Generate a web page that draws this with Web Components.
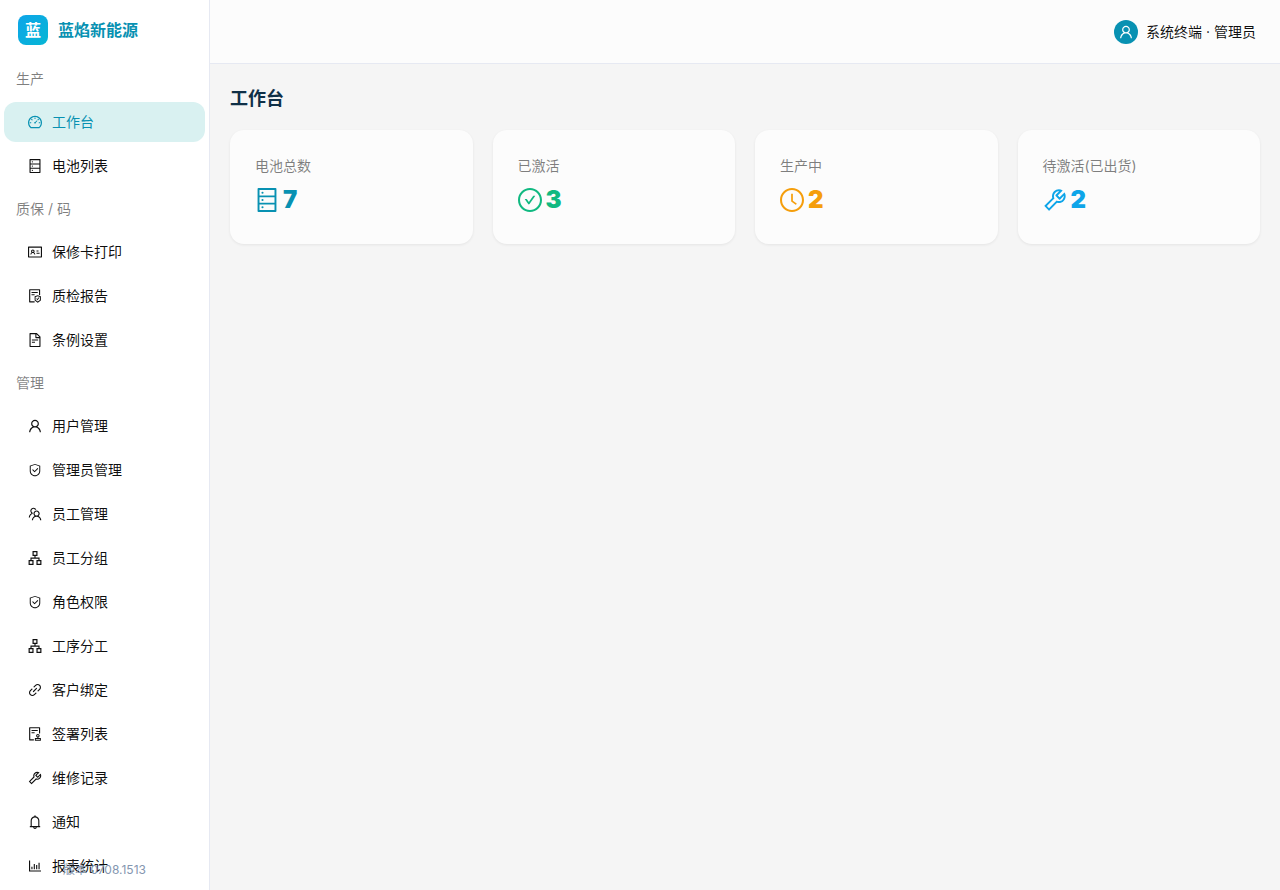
<!DOCTYPE html>
<html lang="zh-CN">
<head>
<meta charset="utf-8">
<title>蓝焰新能源</title>
<style>
    body{
        margin: 0;
        background: #f5f5f5;
        color: rgba(0, 0, 0, .94);
        font: 14px/22px Inter, "Noto Sans CJK SC", sans-serif;
        --primary: #0891b2;
        --line: #e6e9f2;
        --muted: rgba(0, 0, 0, .5);
    }
</style>
</head>
<body>
<app-layout>
    <side-brand slot="side" mark="蓝">蓝焰新能源</side-brand>
    <menu-group slot="side" label="生产">
        <menu-item icon="dashboard" active>工作台</menu-item>
        <menu-item icon="database">电池列表</menu-item>
    </menu-group>
    <menu-group slot="side" label="质保 / 码">
        <menu-item icon="idcard">保修卡打印</menu-item>
        <menu-item icon="protect">质检报告</menu-item>
        <menu-item icon="file">条例设置</menu-item>
    </menu-group>
    <menu-group slot="side" label="管理">
        <menu-item icon="user">用户管理</menu-item>
        <menu-item icon="safety">管理员管理</menu-item>
        <menu-item icon="team">员工管理</menu-item>
        <menu-item icon="apartment">员工分组</menu-item>
        <menu-item icon="safety">角色权限</menu-item>
        <menu-item icon="apartment">工序分工</menu-item>
        <menu-item icon="link">客户绑定</menu-item>
        <menu-item icon="audit">签署列表</menu-item>
        <menu-item icon="tool">维修记录</menu-item>
        <menu-item icon="bell">通知</menu-item>
        <menu-item icon="chart">报表统计</menu-item>
    </menu-group>
    <span slot="version">版本 0708.1513</span>
    <user-badge slot="header">系统终端 · 管理员</user-badge>
    <page-title>工作台</page-title>
    <stat-grid>
        <stat-card label="电池总数" icon="database" color="#0891b2">7</stat-card>
        <stat-card label="已激活" icon="check" color="#10b981">3</stat-card>
        <stat-card label="生产中" icon="clock" color="#f59e0b">2</stat-card>
        <stat-card label="待激活(已出货)" icon="tool" color="#0ea5e9">2</stat-card>
    </stat-grid>
</app-layout>

<script>
const RING = 'M512 64C264.6 64 64 264.6 64 512s200.6 448 448 448 448-200.6 448-448S759.4 64 512 64zm0 820c-205.4 0-372-166.6-372-372s166.6-372 372-372 372 166.6 372 372-166.6 372-372 372z'

const ICONS = {
    dashboard: 'M924.8 385.6a446.7 446.7 0 00-96-142.4 446.7 446.7 0 00-142.4-96C631.1 123.8 572.5 112 512 112s-119.1 11.8-174.4 35.2a446.7 446.7 0 00-142.4 96 446.7 446.7 0 00-96 142.4C75.8 440.9 64 499.5 64 560c0 132.7 58.3 257.7 159.9 343.1l1.7 1.4c5.8 4.8 13.1 7.5 20.6 7.5h531.7c7.5 0 14.8-2.7 20.6-7.5l1.7-1.4C901.7 817.7 960 692.7 960 560c0-60.5-11.9-119.1-35.2-174.4zM761.4 836H262.6A371.12 371.12 0 01140 560c0-99.4 38.7-192.8 109-263 70.3-70.3 163.7-109 263-109 99.4 0 192.8 38.7 263 109 70.3 70.3 109 163.7 109 263 0 105.6-44.5 205.5-122.6 276zM623.5 421.5a8.03 8.03 0 00-11.3 0L527.7 506c-18.7-5-39.4-.2-54.1 14.5a55.95 55.95 0 000 79.2 55.95 55.95 0 0079.2 0 55.87 55.87 0 0014.5-54.1l84.5-84.5c3.1-3.1 3.1-8.2 0-11.3l-28.3-28.3zM490 320h44c4.4 0 8-3.6 8-8v-80c0-4.4-3.6-8-8-8h-44c-4.4 0-8 3.6-8 8v80c0 4.4 3.6 8 8 8zm260 218v44c0 4.4 3.6 8 8 8h80c4.4 0 8-3.6 8-8v-44c0-4.4-3.6-8-8-8h-80c-4.4 0-8 3.6-8 8zm12.7-197.2l-31.1-31.1a8.03 8.03 0 00-11.3 0l-56.6 56.6a8.03 8.03 0 000 11.3l31.1 31.1c3.1 3.1 8.2 3.1 11.3 0l56.6-56.6c3.1-3.1 3.1-8.2 0-11.3zm-458.6-31.1a8.03 8.03 0 00-11.3 0l-31.1 31.1a8.03 8.03 0 000 11.3l56.6 56.6c3.1 3.1 8.2 3.1 11.3 0l31.1-31.1c3.1-3.1 3.1-8.2 0-11.3l-56.6-56.6zM262 530h-80c-4.4 0-8 3.6-8 8v44c0 4.4 3.6 8 8 8h80c4.4 0 8-3.6 8-8v-44c0-4.4-3.6-8-8-8z',
    database: 'M832 64H192c-17.7 0-32 14.3-32 32v832c0 17.7 14.3 32 32 32h640c17.7 0 32-14.3 32-32V96c0-17.7-14.3-32-32-32zm-600 72h560v208H232V136zm560 480H232V408h560v208zm0 272H232V680h560v208zM304 240a40 40 0 1080 0 40 40 0 10-80 0zm0 272a40 40 0 1080 0 40 40 0 10-80 0zm0 272a40 40 0 1080 0 40 40 0 10-80 0z',
    idcard: 'M928 160H96c-17.7 0-32 14.3-32 32v640c0 17.7 14.3 32 32 32h832c17.7 0 32-14.3 32-32V192c0-17.7-14.3-32-32-32zm-40 632H136V232h752v560zM610.3 476h123.4c1.3 0 2.3-3.6 2.3-8v-48c0-4.4-1-8-2.3-8H610.3c-1.3 0-2.3 3.6-2.3 8v48c0 4.4 1 8 2.3 8zm4.8 144h185.7c3.9 0 7.1-3.6 7.1-8v-48c0-4.4-3.2-8-7.1-8H615.1c-3.9 0-7.1 3.6-7.1 8v48c0 4.4 3.2 8 7.1 8zM224 673h43.9c4.2 0 7.6-3.3 7.9-7.5 3.8-50.5 46-90.5 97.2-90.5s93.4 40 97.2 90.5c.3 4.2 3.7 7.5 7.9 7.5H522a8 8 0 008-8.4c-2.8-53.3-32-99.7-74.6-126.1a111.8 111.8 0 0029.1-75.5c0-61.9-49.9-112-111.4-112s-111.4 50.1-111.4 112c0 29.1 11 55.5 29.1 75.5a158.09 158.09 0 00-74.6 126.1c-.4 4.6 3.2 8.4 7.8 8.4zm149-262c28.5 0 51.7 23.3 51.7 52s-23.2 52-51.7 52-51.7-23.3-51.7-52 23.2-52 51.7-52z',
    protect: 'M644.7 669.2a7.92 7.92 0 00-6.5-3.3H594c-6.5 0-10.3 7.4-6.5 12.6l73.8 102.1c3.2 4.4 9.7 4.4 12.9 0l114.2-158c3.8-5.3 0-12.6-6.5-12.6h-44.3c-2.6 0-5 1.2-6.5 3.3l-63.5 87.8-22.9-31.9zM688 306v-48c0-4.4-3.6-8-8-8H296c-4.4 0-8 3.6-8 8v48c0 4.4 3.6 8 8 8h384c4.4 0 8-3.6 8-8zm-392 88c-4.4 0-8 3.6-8 8v48c0 4.4 3.6 8 8 8h184c4.4 0 8-3.6 8-8v-48c0-4.4-3.6-8-8-8H296zm184 458H208V148h560v296c0 4.4 3.6 8 8 8h56c4.4 0 8-3.6 8-8V108c0-17.7-14.3-32-32-32H168c-17.7 0-32 14.3-32 32v784c0 17.7 14.3 32 32 32h312c4.4 0 8-3.6 8-8v-56c0-4.4-3.6-8-8-8zm402.6-320.8l-192-66.7c-.9-.3-1.7-.4-2.6-.4s-1.8.1-2.6.4l-192 66.7a7.96 7.96 0 00-5.4 7.5v251.1c0 2.5 1.1 4.8 3.1 6.3l192 150.2c1.4 1.1 3.2 1.7 4.9 1.7s3.5-.6 4.9-1.7l192-150.2c1.9-1.5 3.1-3.8 3.1-6.3V538.7c0-3.4-2.2-6.4-5.4-7.5zM826 763.7L688 871.6 550 763.7V577l138-48 138 48v186.7z',
    file: 'M854.6 288.6L639.4 73.4c-6-6-14.1-9.4-22.6-9.4H192c-17.7 0-32 14.3-32 32v832c0 17.7 14.3 32 32 32h640c17.7 0 32-14.3 32-32V311.3c0-8.5-3.4-16.7-9.4-22.7zM790.2 326H602V137.8L790.2 326zm1.8 562H232V136h302v216a42 42 0 0042 42h216v494zM504 618H320c-4.4 0-8 3.6-8 8v48c0 4.4 3.6 8 8 8h184c4.4 0 8-3.6 8-8v-48c0-4.4-3.6-8-8-8zM312 490v48c0 4.4 3.6 8 8 8h384c4.4 0 8-3.6 8-8v-48c0-4.4-3.6-8-8-8H320c-4.4 0-8 3.6-8 8z',
    user: 'M858.5 763.6a374 374 0 00-80.6-119.5 375.63 375.63 0 00-119.5-80.6c-.4-.2-.8-.3-1.2-.5C719.5 518 760 444.7 760 362c0-137-111-248-248-248S264 225 264 362c0 82.7 40.5 156 102.8 201.1-.4.2-.8.3-1.2.5-44.8 18.9-85 46-119.5 80.6a375.63 375.63 0 00-80.6 119.5A371.7 371.7 0 00136 901.8a8 8 0 008 8.2h60c4.4 0 7.9-3.5 8-7.8 2-77.2 33-149.5 87.8-204.3 56.7-56.7 132-87.9 212.2-87.9s155.5 31.2 212.2 87.9C779 752.7 810 825 812 902.2c.1 4.4 3.6 7.8 8 7.8h60a8 8 0 008-8.2c-1-47.8-10.9-94.3-29.5-138.2zM512 534c-45.9 0-89.1-17.9-121.6-50.4S340 407.9 340 362c0-45.9 17.9-89.1 50.4-121.6S466.1 190 512 190s89.1 17.9 121.6 50.4S684 316.1 684 362c0 45.9-17.9 89.1-50.4 121.6S557.9 534 512 534z',
    safety: 'M512 64L128 192v384c0 212.1 171.9 384 384 384s384-171.9 384-384V192L512 64zm312 512c0 172.3-139.7 312-312 312S200 748.3 200 576V246l312-110 312 110v330zM378.4 475.1a35.91 35.91 0 00-50.9 0 35.91 35.91 0 000 50.9l129.4 129.4 2.1 2.1a33.98 33.98 0 0048.1 0L730.6 434a33.98 33.98 0 000-48.1l-2.8-2.8a33.98 33.98 0 00-48.1 0L483 579.7 378.4 475.1z',
    team: 'M824.2 699.9a301.55 301.55 0 00-86.4-60.4C783.1 602.8 812 546.8 812 484c0-110.8-92.4-201.7-203.2-200-109.1 1.7-197 90.6-197 200 0 62.8 29 118.8 74.2 155.5a300.95 300.95 0 00-86.4 60.4C345 754.6 314 826.8 312 903.8a8 8 0 008 8.2h56c4.3 0 7.9-3.4 8-7.7 1.9-58 25.4-112.3 66.7-153.5A226.62 226.62 0 01612 684c60.9 0 118.2 23.7 161.3 66.8C814.6 792 838 846.3 840 904.3c.1 4.3 3.7 7.7 8 7.7h56a8 8 0 008-8.2c-2-77-33-149.2-87.8-203.9zM612 612c-34.2 0-66.4-13.3-90.5-37.5a126.86 126.86 0 01-37.5-91.8c.3-32.8 13.4-64.5 36.3-88 24-24.6 56.1-38.3 90.4-38.7 33.9-.3 66.8 12.9 91 36.6 24.8 24.3 38.4 56.8 38.4 91.4 0 34.2-13.3 66.3-37.5 90.5A127.3 127.3 0 01612 612zM361.5 510.4c-.9-8.7-1.4-17.5-1.4-26.4 0-15.9 1.5-31.4 4.3-46.5.7-3.6-1.2-7.3-4.5-8.8-13.6-6.1-26.1-14.5-36.9-25.1a127.54 127.54 0 01-38.7-95.4c.9-32.1 13.8-62.6 36.3-85.6 24.7-25.3 57.9-39.1 93.2-38.7 31.9.3 62.7 12.6 86 34.4 7.9 7.4 14.7 15.6 20.4 24.4 2 3.1 5.9 4.4 9.3 3.2 17.6-6.1 36.2-10.4 55.3-12.4 5.6-.6 8.8-6.6 6.3-11.6-32.5-64.3-98.9-108.7-175.7-109.9-110.9-1.7-203.3 89.2-203.3 199.9 0 62.8 28.9 118.8 74.2 155.5-31.8 14.7-61.1 35-86.5 60.4-54.8 54.7-85.8 126.9-87.8 204a8 8 0 008 8.2h56.1c4.3 0 7.9-3.4 8-7.7 1.9-58 25.4-112.3 66.7-153.5 29.4-29.4 65.4-49.8 104.7-59.7 3.9-1 6.5-4.7 6-8.7z',
    apartment: 'M908 640H804V488c0-4.4-3.6-8-8-8H548v-96h108c8.8 0 16-7.2 16-16V80c0-8.8-7.2-16-16-16H368c-8.8 0-16 7.2-16 16v288c0 8.8 7.2 16 16 16h108v96H228c-4.4 0-8 3.6-8 8v152H116c-8.8 0-16 7.2-16 16v288c0 8.8 7.2 16 16 16h288c8.8 0 16-7.2 16-16V656c0-8.8-7.2-16-16-16H292v-88h440v88H620c-8.8 0-16 7.2-16 16v288c0 8.8 7.2 16 16 16h288c8.8 0 16-7.2 16-16V656c0-8.8-7.2-16-16-16zm-564 76v168H176V716h168zm84-408V140h168v168H428zm420 576H680V716h168v168z',
    link: 'M574 665.4a8.03 8.03 0 00-11.3 0L446.5 781.6c-53.8 53.8-144.6 59.5-204 0-59.5-59.5-53.8-150.2 0-204l116.2-116.2c3.1-3.1 3.1-8.2 0-11.3l-39.8-39.8a8.03 8.03 0 00-11.3 0L191.4 526.5c-84.6 84.6-84.6 221.5 0 306s221.5 84.6 306 0l116.2-116.2c3.1-3.1 3.1-8.2 0-11.3L574 665.4zm258.6-474c-84.6-84.6-221.5-84.6-306 0L410.3 307.6a8.03 8.03 0 000 11.3l39.7 39.7c3.1 3.1 8.2 3.1 11.3 0l116.2-116.2c53.8-53.8 144.6-59.5 204 0 59.5 59.5 53.8 150.2 0 204L665.3 562.6a8.03 8.03 0 000 11.3l39.8 39.8c3.1 3.1 8.2 3.1 11.3 0l116.2-116.2c84.5-84.6 84.5-221.5 0-306.1zM610.1 372.3a8.03 8.03 0 00-11.3 0L372.3 598.7a8.03 8.03 0 000 11.3l39.6 39.6c3.1 3.1 8.2 3.1 11.3 0l226.4-226.4c3.1-3.1 3.1-8.2 0-11.3l-39.5-39.6z',
    audit: 'M296 250c-4.4 0-8 3.6-8 8v48c0 4.4 3.6 8 8 8h384c4.4 0 8-3.6 8-8v-48c0-4.4-3.6-8-8-8H296zm184 144H296c-4.4 0-8 3.6-8 8v48c0 4.4 3.6 8 8 8h184c4.4 0 8-3.6 8-8v-48c0-4.4-3.6-8-8-8zm-48 458H208V148h560v320c0 4.4 3.6 8 8 8h56c4.4 0 8-3.6 8-8V108c0-17.7-14.3-32-32-32H168c-17.7 0-32 14.3-32 32v784c0 17.7 14.3 32 32 32h264c4.4 0 8-3.6 8-8v-56c0-4.4-3.6-8-8-8zm440-88H728v-36.6c46.3-13.8 80-56.6 80-107.4 0-61.9-50.1-112-112-112s-112 50.1-112 112c0 50.7 33.7 93.6 80 107.4V764H520c-8.8 0-16 7.2-16 16v152c0 8.8 7.2 16 16 16h352c8.8 0 16-7.2 16-16V780c0-8.8-7.2-16-16-16zM646 620c0-27.6 22.4-50 50-50s50 22.4 50 50-22.4 50-50 50-50-22.4-50-50zm180 266H566v-60h260v60z',
    tool: 'M876.6 239.5c-.5-.9-1.2-1.8-2-2.5-5-5-13.1-5-18.1 0L684.2 409.3l-67.9-67.9L788.7 169c.8-.8 1.4-1.6 2-2.5 3.6-6.1 1.6-13.9-4.5-17.5-98.2-58-226.8-44.7-311.3 39.7-67 67-89.2 162-66.5 247.4l-293 293c-3 3-2.8 7.9.3 11l169.7 169.7c3.1 3.1 8.1 3.3 11 .3l292.9-292.9c85.5 22.8 180.5.7 247.6-66.4 84.4-84.5 97.7-213.1 39.7-311.3zM786 499.8c-58.1 58.1-145.3 69.3-214.6 33.6l-8.8 8.8-.1-.1-274 274.1-79.2-79.2 230.1-230.1s0 .1.1.1l52.8-52.8c-35.7-69.3-24.5-156.5 33.6-214.6a184.2 184.2 0 01144-53.5L537 318.9a32.05 32.05 0 000 45.3l124.5 124.5a32.05 32.05 0 0045.3 0l132.8-132.8c3.7 51.8-14.4 104.8-53.6 143.9z',
    bell: 'M816 768h-24V428c0-141.1-104.3-257.7-240-277.1V112c0-22.1-17.9-40-40-40s-40 17.9-40 40v38.9c-135.7 19.4-240 136-240 277.1v340h-24c-17.7 0-32 14.3-32 32v32c0 4.4 3.6 8 8 8h216c0 61.8 50.2 112 112 112s112-50.2 112-112h216c4.4 0 8-3.6 8-8v-32c0-17.7-14.3-32-32-32zM512 888c-26.5 0-48-21.5-48-48h96c0 26.5-21.5 48-48 48zM304 768V428c0-55.6 21.6-107.8 60.9-147.1S456.4 220 512 220c55.6 0 107.8 21.6 147.1 60.9S720 372.4 720 428v340H304z',
    chart: 'M888 792H200V168c0-4.4-3.6-8-8-8h-56c-4.4 0-8 3.6-8 8v688c0 4.4 3.6 8 8 8h752c4.4 0 8-3.6 8-8v-56c0-4.4-3.6-8-8-8zM280 712V552h72v160zM432 712V376h72v336zM584 712V454h72v258zM736 712V296h72v416z',
    check: RING + 'M699 353h-46.9c-10.2 0-19.9 4.9-25.9 13.3L469 584.3l-71.2-98.8c-6-8.3-15.6-13.3-25.9-13.3H325c-6.5 0-10.3 7.4-6.5 12.7l124.6 172.8a31.8 31.8 0 0051.7 0l210.6-292c3.9-5.3.1-12.7-6.4-12.7z',
    clock: RING + 'M686.7 638.6L544.1 535.5V288c0-4.4-3.6-8-8-8H488c-4.4 0-8 3.6-8 8v275.4c0 2.6 1.2 5 3.3 6.5l165.4 120.6c3.6 2.6 8.6 1.8 11.2-1.7l28.6-39c2.6-3.7 1.8-8.7-1.8-11.2z'
}

/**
 * Icon as inline SVG, sized by the font size
 * @param {string} name
 * @returns {string}
 */
function icon(name){
    const box = name === 'safety' ? '0 0 1024 1024' : '64 64 896 896'
    return `<svg viewBox="${box}" width="1em" height="1em" fill="currentColor" fill-rule="evenodd" aria-hidden="true"><path d="${ICONS[name]}"/></svg>`
}

class AppLayout extends HTMLElement{
    constructor(){
        super()
        this.attachShadow({mode: 'open'}).innerHTML = `<style>
                :host{
                    display: grid;
                    grid-template-columns: 210px 1fr;
                    height: 100vh;
                }
                aside{
                    position: relative;
                    box-sizing: border-box;
                    overflow: hidden;
                    background: #fff;
                    border-right: 1px solid var(--line);
                }
                .version{
                    position: absolute;
                    left: 0;
                    right: 0;
                    bottom: 10px;
                    text-align: center;
                    font-size: 12px;
                    line-height: 20px;
                    color: #8496b0;
                }
                .page{
                    display: flex;
                    flex-direction: column;
                    min-width: 0;
                }
                header{
                    box-sizing: border-box;
                    height: 64px;
                    padding: 0 24px;
                    display: flex;
                    align-items: center;
                    justify-content: flex-end;
                    background: #fcfcfc;
                    border-bottom: 1px solid var(--line);
                }
                main{
                    padding: 20px;
                }
            </style>
            <aside>
                <nav><slot name="side"></slot></nav>
                <div class="version"><slot name="version"></slot></div>
            </aside>
            <div class="page">
                <header><slot name="header"></slot></header>
                <main><slot></slot></main>
            </div>`
    }
}

class SideBrand extends HTMLElement{
    constructor(){
        super()
        this.attachShadow({mode: 'open'}).innerHTML = `<style>
                :host{
                    display: flex;
                    align-items: center;
                    gap: 10px;
                    height: 60px;
                    padding: 0 18px;
                    font-size: 16px;
                    font-weight: 700;
                    color: var(--primary);
                }
                .mark{
                    width: 30px;
                    line-height: 30px;
                    border-radius: 8px;
                    text-align: center;
                    color: #fff;
                    background: linear-gradient(135deg, #0ea5e9, #06b6d4);
                }
            </style>
            <span class="mark">${this.getAttribute('mark')}</span>
            <slot></slot>`
    }
}

class MenuGroup extends HTMLElement{
    constructor(){
        super()
        this.attachShadow({mode: 'open'}).innerHTML = `<style>
                :host{
                    display: block;
                }
                .label{
                    padding: 8px 16px;
                    color: var(--muted);
                }
                .items{
                    display: grid;
                    gap: 4px;
                    padding: 4px;
                }
            </style>
            <div class="label">${this.getAttribute('label')}</div>
            <div class="items"><slot></slot></div>`
    }
}

class MenuItem extends HTMLElement{
    constructor(){
        super()
        this.attachShadow({mode: 'open'}).innerHTML = `<style>
                :host{
                    display: block;
                }
                a{
                    display: flex;
                    align-items: center;
                    gap: 10px;
                    height: 40px;
                    padding: 0 16px 0 24px;
                    border-radius: 12px;
                    color: inherit;
                    text-decoration: none;
                }
                :host([active]) a{
                    color: var(--primary);
                    background: #d9f1f1;
                }
            </style>
            <a href="#">${icon(this.getAttribute('icon'))}<slot></slot></a>`
    }
}

class UserBadge extends HTMLElement{
    constructor(){
        super()
        this.attachShadow({mode: 'open'}).innerHTML = `<style>
                :host{
                    display: flex;
                    align-items: center;
                    gap: 8px;
                }
                .avatar{
                    display: grid;
                    place-items: center;
                    width: 24px;
                    height: 24px;
                    border-radius: 50%;
                    color: #fff;
                    background: var(--primary);
                }
            </style>
            <span class="avatar">${icon('user')}</span>
            <slot></slot>`
    }
}

class PageTitle extends HTMLElement{
    constructor(){
        super()
        this.attachShadow({mode: 'open'}).innerHTML = `<style>
                :host{
                    display: block;
                    margin-bottom: 16px;
                }
                h1{
                    margin: 0;
                    font-size: 18px;
                    line-height: 30px;
                    font-weight: 700;
                    color: #0f3047;
                }
            </style>
            <h1><slot></slot></h1>`
    }
}

class StatGrid extends HTMLElement{
    constructor(){
        super()
        this.attachShadow({mode: 'open'}).innerHTML = `<style>
                :host{
                    display: grid;
                    grid-template-columns: repeat(4, 1fr);
                    gap: 20px;
                }
            </style>
            <slot></slot>`
    }
}

class StatCard extends HTMLElement{
    constructor(){
        super()
        this.attachShadow({mode: 'open'}).innerHTML = `<style>
                :host{
                    display: block;
                    padding: 25px;
                    border-radius: 14px;
                    background: #fcfcfc;
                    box-shadow: 0 1px 3px rgba(0, 0, 0, .07);
                }
                .label{
                    margin-bottom: 4px;
                    color: var(--muted);
                }
                .value{
                    display: flex;
                    align-items: center;
                    gap: 4px;
                    font-size: 24px;
                    line-height: 38px;
                    font-weight: 900;
                    color: ${this.getAttribute('color')};
                }
            </style>
            <div class="label">${this.getAttribute('label')}</div>
            <div class="value">${icon(this.getAttribute('icon'))}<slot></slot></div>`
    }
}

customElements.define('app-layout', AppLayout)
customElements.define('side-brand', SideBrand)
customElements.define('menu-group', MenuGroup)
customElements.define('menu-item', MenuItem)
customElements.define('user-badge', UserBadge)
customElements.define('page-title', PageTitle)
customElements.define('stat-grid', StatGrid)
customElements.define('stat-card', StatCard)
</script>
</body>
</html>
